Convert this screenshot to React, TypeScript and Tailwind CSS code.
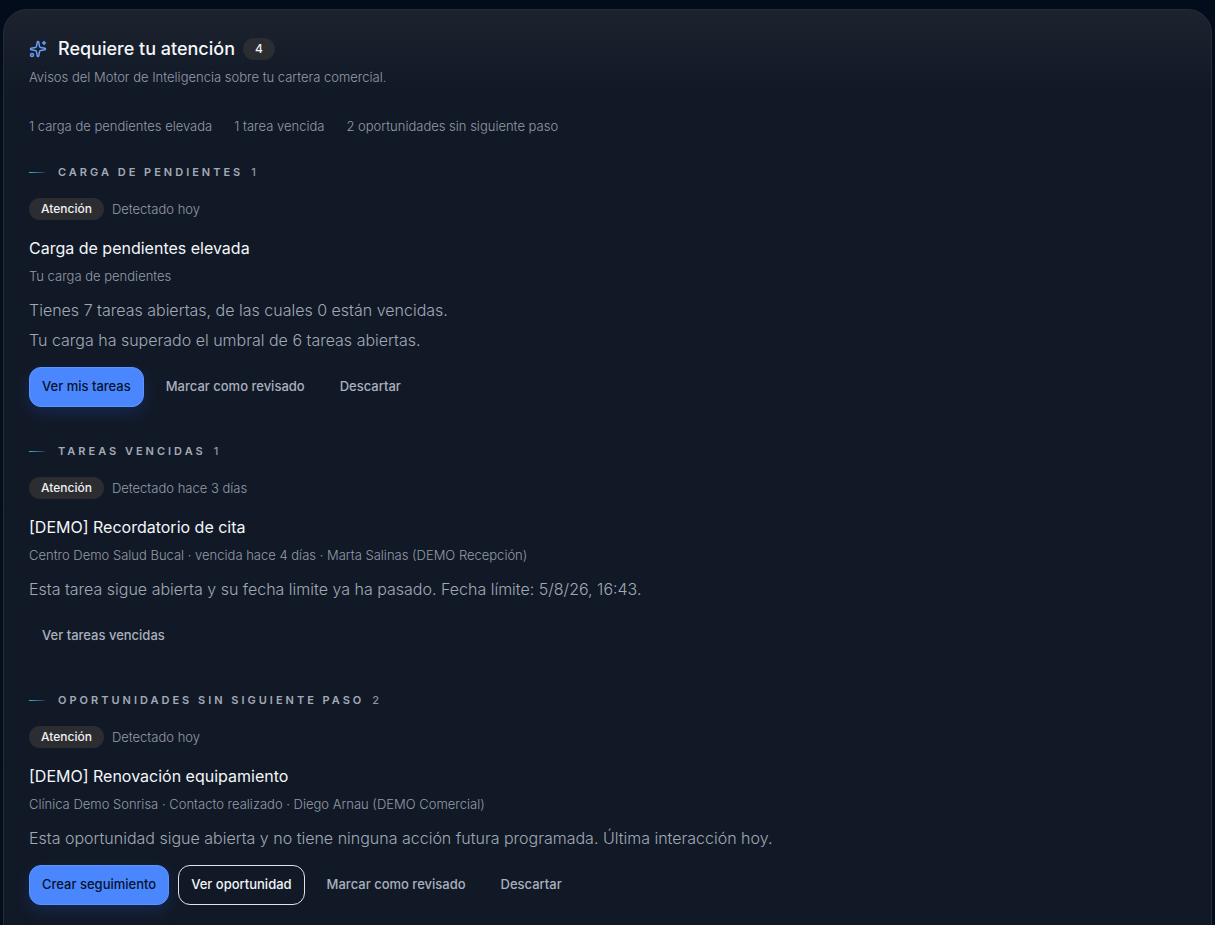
const summary = [
  "1 carga de pendientes elevada",
  "1 tarea vencida",
  "2 oportunidades sin siguiente paso",
];

type Variant = "primary" | "outline" | "ghost";

type Action = {
  label: string;
  variant: Variant;
};

type Notice = {
  group: string;
  count: number;
  detected: string;
  title: string;
  meta: string;
  body: string[];
  actions: Action[];
};

const notices: Notice[] = [
  {
    group: "Carga de pendientes",
    count: 1,
    detected: "Detectado hoy",
    title: "Carga de pendientes elevada",
    meta: "Tu carga de pendientes",
    body: [
      "Tienes 7 tareas abiertas, de las cuales 0 están vencidas.",
      "Tu carga ha superado el umbral de 6 tareas abiertas.",
    ],
    actions: [
      { label: "Ver mis tareas", variant: "primary" },
      { label: "Marcar como revisado", variant: "ghost" },
      { label: "Descartar", variant: "ghost" },
    ],
  },
  {
    group: "Tareas vencidas",
    count: 1,
    detected: "Detectado hace 3 días",
    title: "[DEMO] Recordatorio de cita",
    meta: "Centro Demo Salud Bucal · vencida hace 4 días · Marta Salinas (DEMO Recepción)",
    body: [
      "Esta tarea sigue abierta y su fecha limite ya ha pasado. Fecha límite: 5/8/26, 16:43.",
    ],
    actions: [{ label: "Ver tareas vencidas", variant: "ghost" }],
  },
  {
    group: "Oportunidades sin siguiente paso",
    count: 2,
    detected: "Detectado hoy",
    title: "[DEMO] Renovación equipamiento",
    meta: "Clínica Demo Sonrisa · Contacto realizado · Diego Arnau (DEMO Comercial)",
    body: [
      "Esta oportunidad sigue abierta y no tiene ninguna acción futura programada. Última interacción hoy.",
    ],
    actions: [
      { label: "Crear seguimiento", variant: "primary" },
      { label: "Ver oportunidad", variant: "outline" },
      { label: "Marcar como revisado", variant: "ghost" },
      { label: "Descartar", variant: "ghost" },
    ],
  },
];

const buttonStyles: Record<Variant, string> = {
  primary:
    "border-[#5c95ff] bg-[#4a87ff] text-[#07122b] shadow-[0_6px_16px_rgba(37,84,200,0.25)] hover:bg-[#5c95ff]",
  outline: "border-[#dfe3ea] text-[#f1f4f9] hover:bg-white/5",
  ghost: "border-transparent text-[#a9b0bd] hover:text-white",
};

function SparklesIcon() {
  return (
    <svg
      viewBox="0 0 24 24"
      className="size-[18px] shrink-0 text-[#6a9cf5]"
      fill="none"
      stroke="currentColor"
      strokeWidth="2"
      strokeLinecap="round"
      strokeLinejoin="round"
      aria-hidden="true"
    >
      <path d="M11.017 2.814a1 1 0 0 1 1.966 0l1.051 5.558a2 2 0 0 0 1.594 1.594l5.558 1.051a1 1 0 0 1 0 1.966l-5.558 1.051a2 2 0 0 0-1.594 1.594l-1.051 5.558a1 1 0 0 1-1.966 0l-1.051-5.558a2 2 0 0 0-1.594-1.594l-5.558-1.051a1 1 0 0 1 0-1.966l5.558-1.051a2 2 0 0 0 1.594-1.594z" />
      <path d="M20 2v4" />
      <path d="M22 4h-4" />
      <circle cx="4" cy="20" r="2" />
    </svg>
  );
}

function NoticeSection({ notice }: { notice: Notice }) {
  return (
    <section>
      <h3 className="flex items-center text-[11px] leading-5 font-semibold tracking-[3px] text-[#a3aab7] uppercase">
        <span className="mr-[13px] h-px w-4 bg-linear-to-r from-[#45abdf] to-[#45abdf]/20" />
        {notice.group}
        <span className="ml-2 font-medium text-[#8f96a4]">{notice.count}</span>
      </h3>

      <div className="mt-4 flex items-center gap-2">
        <span className="rounded-full bg-[#2b2d31] px-3 text-xs leading-[22px] font-medium text-[#f0f1f4]">
          Atención
        </span>
        <span className="text-[13px] leading-5 font-light text-[#949ba9]">{notice.detected}</span>
      </div>

      <h4 className="mt-4 text-base leading-6 text-[#f4f6fa]">{notice.title}</h4>
      <p className="mt-1.5 text-[13px] leading-5 font-light text-[#949ba9]">{notice.meta}</p>

      <div className="mt-[9px] text-base leading-[30px] font-light text-[#a1a8b5]">
        {notice.body.map((line) => (
          <p key={line}>{line}</p>
        ))}
      </div>

      <div className="mt-3 flex flex-wrap gap-[9px]">
        {notice.actions.map(({ label, variant }) => (
          <button
            key={label}
            type="button"
            className={`h-10 rounded-xl border px-3 text-[13px] font-medium transition-colors ${buttonStyles[variant]}`}
          >
            {label}
          </button>
        ))}
      </div>
    </section>
  );
}

export default function App() {
  return (
    <main className="min-h-screen bg-[#030c1b] px-[3px] py-[9px] font-['Inter','Liberation_Sans',sans-serif]">
      <article className="rounded-3xl border border-[#232c39] bg-[#121926] bg-linear-to-b from-[#1c232f] to-[#121926] to-[84px] px-[25px] pt-[27px] pb-16">
        <header>
          <div className="flex items-center">
            <SparklesIcon />
            <h2 className="ml-[11px] text-lg leading-6 font-medium text-[#f4f6fa]">
              Requiere tu atención
            </h2>
            <span className="ml-2 rounded-full bg-[#2b2d31] px-3 text-xs leading-[22px] font-medium text-[#f0f1f4]">
              4
            </span>
          </div>
          <p className="mt-1.5 text-[13px] leading-5 font-light text-[#949ba9]">
            Avisos del Motor de Inteligencia sobre tu cartera comercial.
          </p>
        </header>

        <ul className="mt-[29px] flex flex-wrap gap-x-[22px] text-[13px] leading-5 font-light text-[#949ba9]">
          {summary.map((item) => (
            <li key={item}>{item}</li>
          ))}
        </ul>

        <div className="mt-[26px] flex flex-col gap-[34px]">
          {notices.map((notice) => (
            <NoticeSection key={notice.group} notice={notice} />
          ))}
        </div>
      </article>
    </main>
  );
}
